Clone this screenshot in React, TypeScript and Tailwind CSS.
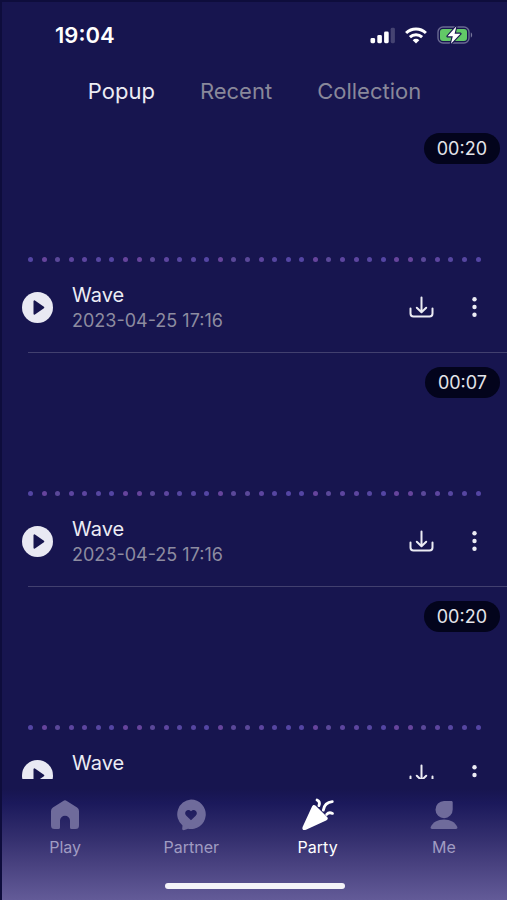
import type { ReactNode } from 'react'
import clsx from 'clsx'

interface Recording {
  id: number
  title: string
  date?: string
  duration: string
}

const recordings: Recording[] = [
  { id: 1, title: 'Wave', date: '2023-04-25 17:16', duration: '00:20' },
  { id: 2, title: 'Wave', date: '2023-04-25 17:16', duration: '00:07' },
  { id: 3, title: 'Wave', duration: '00:20' }
]

const tabs = ['Popup', 'Recent', 'Collection']

const dotColors = ['bg-[#5445a3]', 'bg-[#5646a0]', 'bg-[#5d459f]', 'bg-[#5a4899]', 'bg-[#66449c]']

function StatusBar() {
  return (
    <div className="flex h-[70px] items-center justify-between pr-[34px] pl-[53px]">
      <span className="text-[22px] leading-7 font-semibold">19:04</span>
      <div className="flex items-center gap-2.5">
        <svg width="26" height="17" viewBox="0 0 26 17" fill="currentColor">
          <rect x="1.5" y="11" width="4.6" height="5.2" rx="1.4" />
          <rect x="8.3" y="8" width="4.6" height="8.2" rx="1.4" />
          <rect x="15.1" y="4.5" width="4.6" height="11.7" rx="1.4" />
          <rect x="21.7" y="0.8" width="4.2" height="15.4" rx="1.4" opacity="0.2" />
        </svg>
        <svg width="22" height="17" viewBox="0 0 22 17" fill="none" stroke="currentColor" strokeWidth="3">
          <path d="M1.1 6a14.3 14.3 0 0 1 19.8 0" />
          <path d="M4.9 10.2a8.8 8.8 0 0 1 12.2 0" />
          <path d="M11 16.6l-3.3-3.4a4.7 4.7 0 0 1 6.6 0z" fill="currentColor" stroke="none" />
        </svg>
        <svg width="36" height="20" viewBox="0 0 36 20" fill="none">
          <rect x="1" y="2" width="31" height="16" rx="5" stroke="#6a6992" strokeWidth="1.4" />
          <path d="M33.8 7.5c1.8.6 1.8 4.4 0 5z" fill="#77769b" />
          <rect x="3" y="4" width="27" height="12" rx="3" fill="#62c967" />
          <path
            d="M19.4 1.2L10.5 11.3h5.3l-1.9 7.5L23.5 8.7h-5.9z"
            fill="#fff"
            stroke="#17154f"
            strokeWidth="2.2"
            strokeLinejoin="round"
            paintOrder="stroke"
          />
        </svg>
      </div>
    </div>
  )
}

function Waveform() {
  return (
    <div className="flex justify-between px-[26px]">
      {Array.from({ length: 34 }).map((_, i) => (
        <span key={i} className={clsx('size-[5px] rounded-full', dotColors[(i * 3 + (i % 4)) % 5])} />
      ))}
    </div>
  )
}

function RecordingCard({ item }: { item: Recording }) {
  return (
    <li>
      <div className="flex h-[143px] flex-col justify-between pt-3.5">
        <span className="mr-[7px] self-end rounded-full bg-[#03041c] px-[13px] pt-px text-lg leading-[30px] text-[#e4e4ea]">
          {item.duration}
        </span>
        <Waveform />
      </div>
      <div className="flex h-[90px] items-center px-5">
        <button aria-label="Play" className="shrink-0">
          <svg width="31" height="31" viewBox="0 0 31 31">
            <circle cx="15.5" cy="15.5" r="15.5" fill="#e9e9f3" />
            <path
              d="M12.4 9.2v12.6l9-6.3z"
              fill="#17154f"
              stroke="#17154f"
              strokeWidth="1.8"
              strokeLinejoin="round"
            />
          </svg>
        </button>
        <div className="ml-[19px] h-[54px] flex-1 pt-0.5">
          <p className="text-xl leading-[26px] text-[#ececf4]">{item.title}</p>
          {item.date && <p className="text-lg leading-[26px] text-[#8d8ca0]">{item.date}</p>}
        </div>
        <button aria-label="Download" className="mr-[27px]">
          <svg
            width="26"
            height="24"
            viewBox="0 0 26 24"
            fill="none"
            stroke="#ececf4"
            strokeWidth="2"
            strokeLinecap="round"
            strokeLinejoin="round"
          >
            <path d="M13.5 2.5V17M8.8 12.8l4.7 4.5 4.7-4.5" />
            <path d="M2.5 13.5v5a3 3 0 0 0 3 3h16a3 3 0 0 0 3-3v-5" />
          </svg>
        </button>
        <button aria-label="More">
          <svg width="26" height="22" viewBox="0 0 26 22" fill="#ececf4">
            <circle cx="13.5" cy="3.2" r="2.2" />
            <circle cx="13.5" cy="11" r="2.2" />
            <circle cx="13.5" cy="18.8" r="2.2" />
          </svg>
        </button>
      </div>
      <div className="ml-[26px] h-px bg-[#42406f]" />
    </li>
  )
}

function NavItem({ label, active, children }: { label: string; active?: boolean; children: ReactNode }) {
  return (
    <a
      href="#"
      className={clsx('flex flex-1 flex-col items-center gap-1', active ? 'text-white' : 'text-[#a09cc2]')}
    >
      <svg
        width="34"
        height="34"
        viewBox="0 0 34 34"
        className={active ? 'text-white' : 'text-[#6f6b9b]'}
        fill="currentColor"
      >
        {children}
      </svg>
      <span className="text-base leading-[22px]">{label}</span>
    </a>
  )
}

function BottomNav() {
  return (
    <nav className="flex h-[121px] shrink-0 flex-col bg-[linear-gradient(to_bottom,#17154f_8%,#1b195b_20%,#35306f_50%,#48417f_70%,#635b98)] pt-[19px]">
      <div className="flex">
        <NavItem label="Play">
          <path d="M15.2 2.9a3.4 3.4 0 0 1 3.6 0l10.3 6.6A4.2 4.2 0 0 1 31 13v14.5a3.5 3.5 0 0 1-3.5 3.5h-4a1.5 1.5 0 0 1-1.5-1.5v-6.7a5 5 0 0 0-10 0v6.7a1.5 1.5 0 0 1-1.5 1.5h-4A3.5 3.5 0 0 1 3 27.5V13a4.2 4.2 0 0 1 1.9-3.5z" />
        </NavItem>
        <NavItem label="Partner">
          <path
            fillRule="evenodd"
            d="M17 1.5a14.8 14.8 0 1 1-3 29.3l-3.5 1.3c-1.2.4-2.500.1-2.300-1.300l.3-3.200A14.8 14.8 0 0 1 17 1.5zM17 22.200l4.700-4.400c3.300-3.300-1.300-8-4.700-4.600-3.400-3.400-8 1.300-4.700 4.600z"
          />
        </NavItem>
        <NavItem label="Party" active>
          <path d="M10.9 8.7c.9-2 2.4-2.3 3.8-.9l11.2 11c1.5 1.5 1.1 2.8-.8 3.7L5 31.7c-2.6 1.2-4.3-.3-3.4-2.7z" />
          <g fill="none" stroke="currentColor" strokeWidth="2.8" strokeLinecap="round">
            <path d="M16 2c2.6 1.2 3 3 1.9 5.6" />
            <path d="M22.3 12.2c.8-4.9 3.7-8 9-8.5" />
            <path d="M25.7 16.4c1.7-2 3.5-2.1 5.8-1" />
          </g>
        </NavItem>
        <NavItem label="Me">
          <path d="M17 3h7.2c1 0 1.5.5 1.5 1.5v7A8.6 8.6 0 1 1 17 3z" />
          <path d="M17 21.5c6.2 0 11.5 2.8 13.3 7.6.4 1.2-.2 1.9-1.5 1.9H5.2c-1.3 0-1.9-.7-1.5-1.9C5.5 24.3 10.8 21.5 17 21.5z" />
        </NavItem>
      </div>
      {/* Home indicator */}
      <div className="mx-auto mt-auto mb-[11px] h-1.5 w-[180px] rounded-full bg-[#f4f3f8]" />
    </nav>
  )
}

export default function App() {
  return (
    <div className="flex h-screen flex-col overflow-hidden border-t-2 border-l-2 border-[#0e0d3c] bg-[#17154f] font-['Inter',sans-serif] text-white">
      <header className="-mt-0.5 shrink-0">
        <StatusBar />
        <div role="tablist" className="flex h-[49px] justify-center gap-[45px] text-[22px] leading-[42px]">
          {tabs.map((tab, i) => (
            <button
              key={tab}
              role="tab"
              aria-selected={i === 0}
              className={clsx('h-[42px]', i === 0 ? 'text-[#ececf4]' : 'text-[#89889a]')}
            >
              {tab}
            </button>
          ))}
        </div>
      </header>

      <main className="min-h-0 flex-1 overflow-hidden">
        <ul>
          {recordings.map((item) => (
            <RecordingCard key={item.id} item={item} />
          ))}
        </ul>
      </main>

      <BottomNav />
    </div>
  )
}
